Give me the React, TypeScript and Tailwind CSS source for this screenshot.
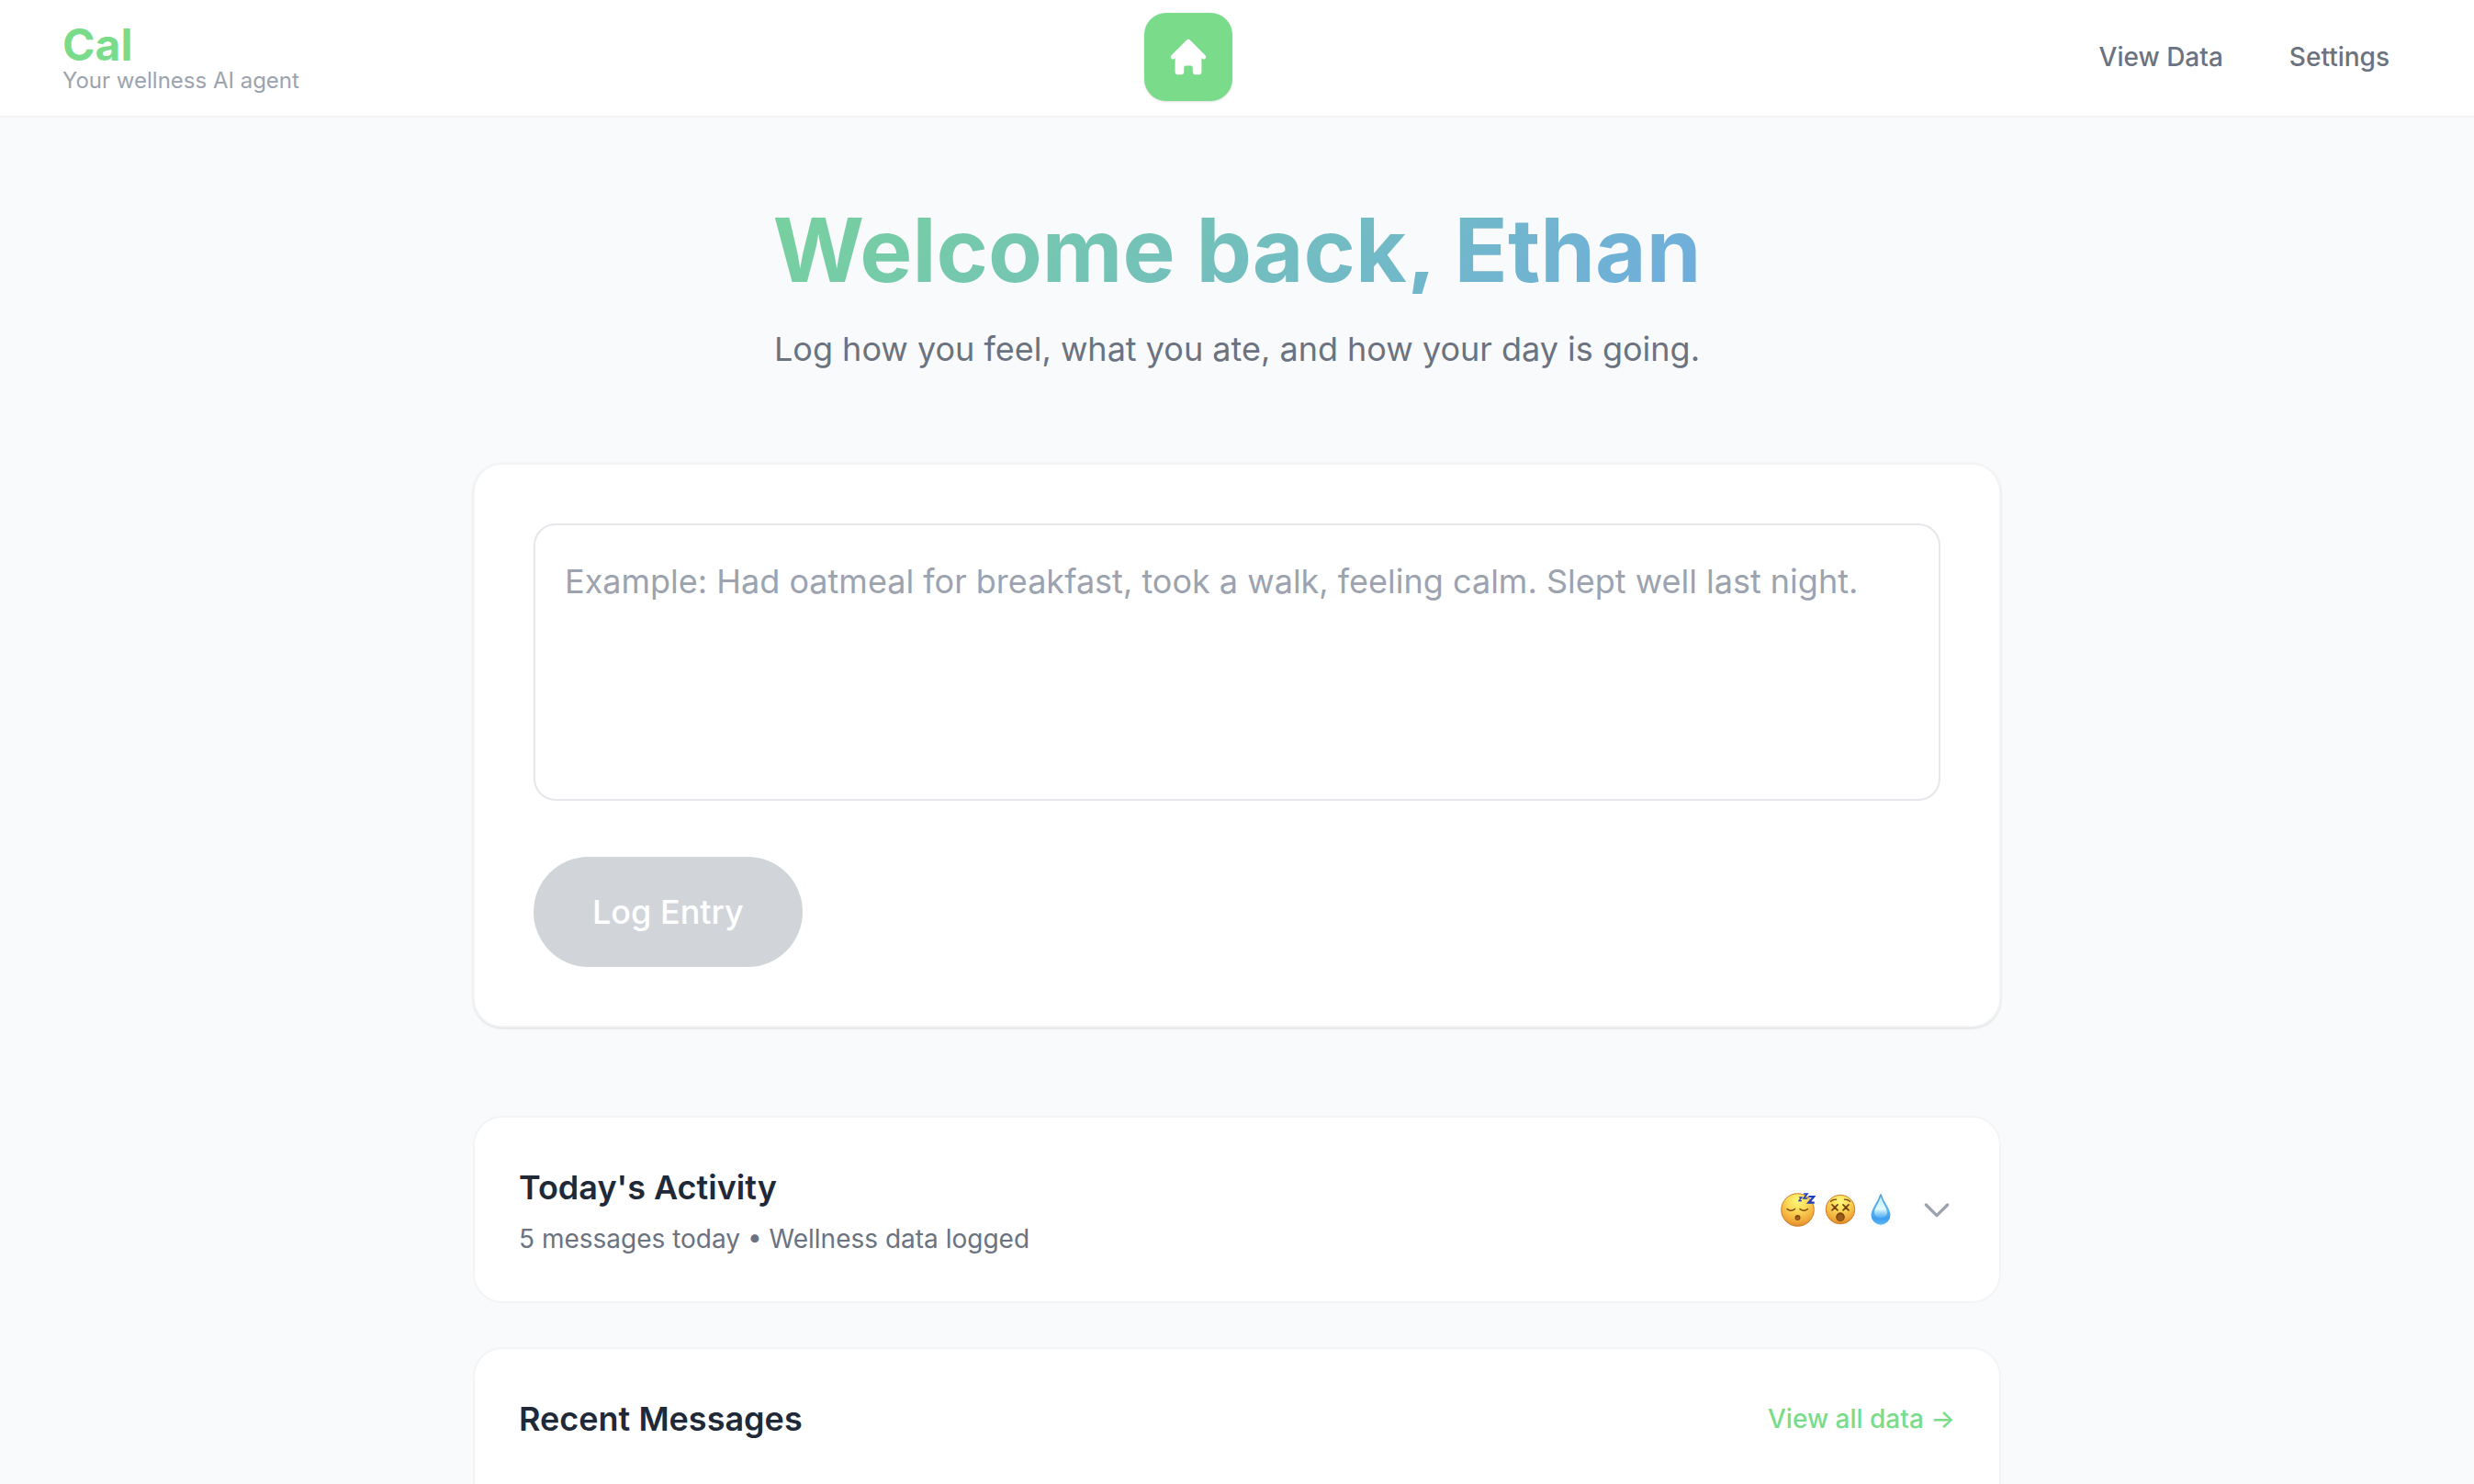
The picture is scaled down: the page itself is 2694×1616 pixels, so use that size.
import React from "react";

function HomeIcon() {
  return (
    <svg viewBox="0 0 20 20" className="size-12" fill="currentColor" aria-hidden="true">
      <path d="M10.707 2.293a1 1 0 00-1.414 0l-7 7a1 1 0 001.414 1.414L4 10.414V17a1 1 0 001 1h2a1 1 0 001-1v-2a1 1 0 011-1h2a1 1 0 011 1v2a1 1 0 001 1h2a1 1 0 001-1v-6.586l.293.293a1 1 0 001.414-1.414l-7-7z" />
    </svg>
  );
}

function FaceGradient({ id }: { id: string }) {
  return (
    <defs>
      <radialGradient id={id} cx="0.5" cy="0.22" r="0.85">
        <stop offset="0" stopColor="#fff77a" />
        <stop offset="0.35" stopColor="#fbdc5a" />
        <stop offset="0.75" stopColor="#f1a93a" />
        <stop offset="1" stopColor="#d27a22" />
      </radialGradient>
    </defs>
  );
}

function SleepingFace() {
  return (
    <svg viewBox="0 0 38 38" className="h-[38px] w-[38px]" role="img" aria-label="Sleeping">
      <FaceGradient id="face-sleep" />
      <circle cx="18.5" cy="19.5" r="17.8" fill="url(#face-sleep)" stroke="#cf7f2c" strokeWidth="1" />
      <g fill="none" stroke="#75420c" strokeLinecap="round" strokeWidth="1.5">
        <path d="M7 18.5q4.200 3.600 8.500 0" />
        <path d="M21 18.500q4.200 3.600 8.500 0" />
      </g>
      <circle cx="18.500" cy="28" r="3" fill="#82480f" />
      <circle cx="18.500" cy="28.600" r="1.600" fill="#a5641c" />
      <g fill="none" stroke="#1f3cc4" strokeLinejoin="miter">
        <path d="M20.200 6h2.600l-2.800 3.600h3" strokeWidth="1.300" />
        <path d="M25 2h4l-4 5h4.300" strokeWidth="1.600" />
        <path d="M30.300 5h6l-6 6.700h6.500" strokeWidth="2.200" />
      </g>
    </svg>
  );
}

function DizzyFace() {
  return (
    <svg viewBox="0 0 34 34" className="h-[34px] w-[34px]" role="img" aria-label="Dizzy">
      <FaceGradient id="face-dizzy" />
      <circle cx="17" cy="17" r="15.800" fill="url(#face-dizzy)" stroke="#cf7f2c" strokeWidth="1" />
      <g fill="none" stroke="#75420c" strokeLinecap="round">
        <path d="M6.500 8.200q2.500-2.200 6-2" strokeWidth="1.300" />
        <path d="M27.500 8.200q-2.500-2.200-6-2" strokeWidth="1.300" />
        <path d="M8 11.800l6 6M14 11.800l-6 6" strokeWidth="1.700" />
        <path d="M20 11.800l6 6M26 11.800l-6 6" strokeWidth="1.700" />
      </g>
      <ellipse cx="17" cy="25.200" rx="4.800" ry="5" fill="#82480f" />
      <ellipse cx="17" cy="26" rx="3.400" ry="3.500" fill="#9a5c1a" />
    </svg>
  );
}

function Droplet() {
  return (
    <svg viewBox="-6 0 34 34" className="h-[34px] w-[34px]" role="img" aria-label="Water">
      <defs>
        <linearGradient id="drop" x1="0" y1="0" x2="0" y2="1">
          <stop offset="0" stopColor="#4c9fd8" />
          <stop offset="0.500" stopColor="#5fb4ee" />
          <stop offset="0.800" stopColor="#3f9def" />
          <stop offset="1" stopColor="#5cb8f5" />
        </linearGradient>
        <linearGradient id="drop-shine" x1="0" y1="0" x2="0" y2="1">
          <stop offset="0" stopColor="#c4ecfb" />
          <stop offset="0.600" stopColor="#e0fbff" />
          <stop offset="1" stopColor="#7cc8f7" stopOpacity="0.400" />
        </linearGradient>
      </defs>
      <path d="M11 .3c.6 0 1 .7 1.300 1.600 1.800 6.600 9.200 14.600 9.200 21.300A10.500 10.500 0 0 1 11 33.700 10.500 10.500 0 0 1 .5 23.200C.5 16.500 7.900 8.500 9.700 1.900 10 1 10.400.3 11 .3z" fill="url(#drop)" />
      <path d="M11 3c1.500 6 7 12.500 7 18 0 3-3 5-7 5s-7-2-7-5C4 15.500 9.500 9 11 3z" fill="url(#drop-shine)" />
    </svg>
  );
}

export default function App() {
  return (
    <div className="h-screen overflow-hidden bg-[#f9fafc] font-['Inter',sans-serif] text-gray-800">
      <header className="border-b-2 border-[#f3f4f5] bg-white">
        <div className="flex h-[126px] items-center justify-between px-17 pb-0.5">
          <div className="flex flex-col pt-1">
            <span className="text-[48px] leading-[48px] font-bold text-[#7adc8b]">Cal</span>
            <span className="text-[24px] leading-[30px] text-[#9ca3af]">Your wellness AI agent</span>
          </div>
          <a
            href="#home"
            aria-label="Home"
            className="flex size-24 items-center justify-center rounded-3xl bg-[#7adc8b] text-white shadow-sm"
          >
            <HomeIcon />
          </a>
          <nav className="flex gap-6 text-[28px] leading-10 font-medium text-[#6b7280]">
            <a href="#data" className="px-6 py-4">View Data</a>
            <a href="#settings" className="px-6 py-4">Settings</a>
          </nav>
        </div>
      </header>

      <main className="mx-auto w-full max-w-[1664px] pt-24">
        <section className="text-center">
          <h1 className="bg-linear-[135deg] from-[#7adc8b] to-[#6ca2f0] bg-clip-text text-[96px] leading-[96px] font-bold text-transparent">
            Welcome back, Ethan
          </h1>
          <p className="mt-8 text-[36px] leading-[56px] text-[#6b7280]">
            Log how you feel, what you ate, and how your day is going.
          </p>
        </section>

        <form
          className="mt-24 rounded-4xl border-2 border-[#f3f4f5] bg-white p-16 shadow-sm"
          onSubmit={(event) => event.preventDefault()}
        >
          <textarea
            aria-label="Journal entry"
            placeholder="Example: Had oatmeal for breakfast, took a walk, feeling calm. Slept well last night."
            className="block h-[302px] w-full resize-none rounded-3xl border-2 border-[#e5e7eb] bg-white px-8 py-8 text-[36px] leading-[58px] placeholder:text-[#9ca3af]"
          />
          <button
            type="submit"
            disabled
            className="mt-[61px] h-[120px] rounded-full bg-[#d1d5da] px-16 text-[36px] leading-[56px] font-medium text-white"
          >
            Log Entry
          </button>
        </form>

        <button
          type="button"
          aria-expanded="false"
          className="mt-24 flex w-full items-center justify-between rounded-4xl border-2 border-[#f3f4f5] bg-white p-12 text-left"
        >
          <span className="flex flex-col gap-2">
            <span className="text-[36px] leading-[56px] font-semibold text-[#1f2937]">Today's Activity</span>
            <span className="text-[28px] leading-10 text-[#6b7280]">5 messages today • Wellness data logged</span>
          </span>
          <span className="flex items-center gap-6">
            <span className="flex items-center gap-2.5">
              <SleepingFace />
              <DizzyFace />
              <Droplet />
            </span>
            <svg viewBox="0 0 24 24" className="size-10" fill="none" stroke="#9ca3af" strokeWidth="2" strokeLinecap="round" strokeLinejoin="round" aria-hidden="true">
              <path d="M19 9l-7 7-7-7" />
            </svg>
          </span>
        </button>

        <section className="mt-12 min-h-80 rounded-4xl border-2 border-[#f3f4f5] bg-white p-12">
          <div className="flex items-center justify-between">
            <h2 className="text-[36px] leading-[56px] font-semibold text-[#1f2937]">Recent Messages</h2>
            <a href="#all" className="text-[28px] leading-10 font-medium text-[#7adc8b]">View all data →</a>
          </div>
        </section>
      </main>
    </div>
  );
}
